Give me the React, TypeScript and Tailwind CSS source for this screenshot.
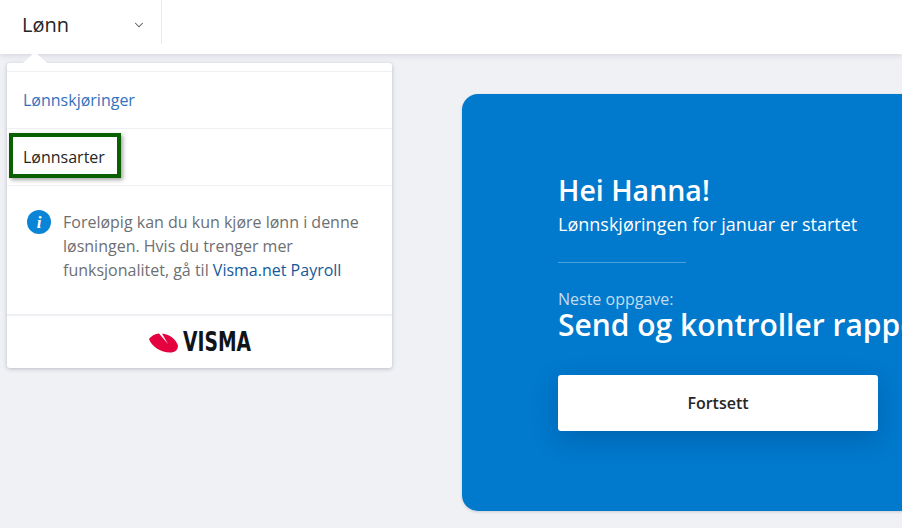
import { ChevronDown } from "lucide-react";

/** Red Visma swoosh. */
function VismaMark() {
  return (
    <svg width="29" height="20" viewBox="0 0 29 20" aria-hidden="true">
      <path
        d="M0 6C2 3 6 0.800 10 0.500L19 11L13 0.500C20 1 27 6 29 12.500C29 17 26 19.500 21 19.500C12 19.500 3 14 0 6Z"
        fill="#e5003f"
      />
    </svg>
  );
}

function InfoIcon() {
  return (
    <div className="flex h-6 w-6 shrink-0 items-center justify-center rounded-full bg-[#0a84d6] font-['Liberation_Serif',serif] text-[17px] font-bold italic leading-none text-white">
      i
    </div>
  );
}

export default function App() {
  return (
    <div className="flex h-[528px] w-[902px] flex-col overflow-hidden bg-[#f0f1f5] font-['Open_Sans',sans-serif]">
      <header className="relative z-10 flex h-[54px] shrink-0 items-start bg-white shadow-[0_1px_6px_rgba(60,70,90,0.18)]">
        <div className="flex h-[44px] w-[162px] items-center justify-between border-r border-[#e8e9ec] pl-[22px] pr-[15px] pt-[6px]">
          <span className="text-[20px] leading-none text-[#252626]">Lønn</span>
          <ChevronDown size={14} strokeWidth={1.75} className="text-[#555]" />
        </div>
      </header>

      <main className="flex flex-1 items-start pl-[7px]">
        <nav className="relative z-20 mt-[9px] w-[385px] shrink-0 rounded-[3px] bg-white pt-2 shadow-[0_1px_4px_rgba(60,70,90,0.3)]">
          <div className="absolute left-[16px] top-[-11px] h-0 w-0 border-x-[12px] border-b-[11px] border-x-transparent border-b-white" />
          <div className="flex h-[58px] items-center border-y border-[#eef0f3] pl-[16px] text-[16px] text-[#3373bd]">
            Lønnskjøringer
          </div>
          <div className="h-[57px] border-b border-[#eef0f3] pl-[2px] pt-[4px]">
            <a className="flex h-[45px] w-[112px] items-center border-4 border-[#0a6000] pl-[10px] pt-[2px] text-[16px] text-[#252626] shadow-[2px_2px_4px_rgba(0,0,0,0.35)]">
              Lønnsarter
            </a>
          </div>
          <div className="flex h-[130px] gap-3 border-b-2 border-[#eef0f3] pl-5 pt-[24px]">
            <InfoIcon />
            <p className="w-[310px] text-[16px] leading-6 text-[#6d6f73]">
              Foreløpig kan du kun kjøre lønn i denne løsningen. Hvis du trenger mer funksjonalitet, gå til{" "}
              <span className="text-[#135a9a]">Visma.net Payroll</span>
            </p>
          </div>
          <div className="flex h-[52px] items-center justify-center gap-[5px] pt-px">
            <VismaMark />
            <div className="w-[68px]">
              <span className="inline-block origin-left scale-x-[0.72] font-['DejaVu_Sans',sans-serif] text-[26px] font-bold leading-none text-[#0f141a]">
                VISMA
              </span>
            </div>
          </div>
        </nav>

        <section className="ml-[70px] mt-[40px] h-[417px] w-[560px] shrink-0 rounded-[16px] bg-[#0179cd] pl-[96px] pt-[78px] shadow-[0_1px_3px_rgba(60,70,90,0.2)]">
          <h1 className="text-[28.5px] font-semibold leading-9 text-white">Hei Hanna!</h1>
          <p className="mt-[2px] whitespace-nowrap text-[18px] leading-[28px] text-white">Lønnskjøringen for januar er startet</p>
          <div className="mt-[24px] h-px w-[128px] bg-[#4a9fdd]" />
          <p className="mt-[26px] text-[16px] leading-[20px] text-[#c4dcf0]">Neste oppgave:</p>
          <h2 className="whitespace-nowrap text-[30px] font-semibold leading-[32px] text-white">
            Send og kontroller rapporter
          </h2>
          <button className="mt-[34px] h-14 w-[320px] rounded-[3px] bg-white text-[16px] font-semibold text-[#252626] shadow-[0_8px_24px_rgba(0,40,90,0.25)]">
            Fortsett
          </button>
        </section>
      </main>
    </div>
  );
}
